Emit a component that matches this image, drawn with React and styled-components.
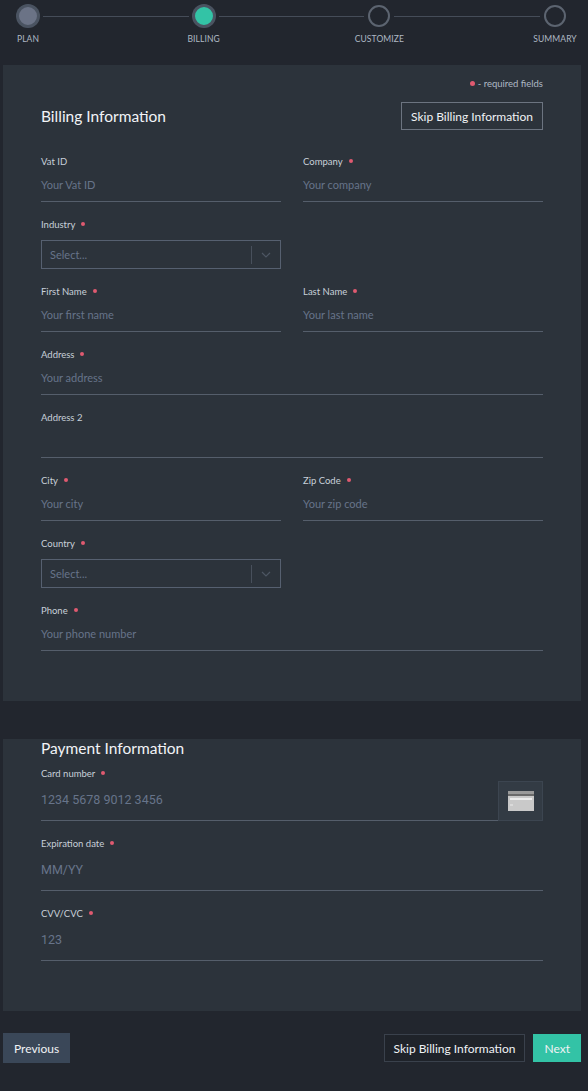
import React from "react";
import styled, { createGlobalStyle } from "styled-components";

const Global = createGlobalStyle`
  body { margin: 0; background: #22262e; font-family: Lato, "Open Sans", sans-serif; color: #e6e9ee; }
  * { box-sizing: border-box; }
`;

const Page = styled.div`padding: 0 7px 12px 3px;`;

const Stepper = styled.div`
  display: flex; align-items: flex-start; padding: 5px 15px 0 14px; height: 65px;
`;
const Step = styled.div`
  display: flex; flex-direction: column; align-items: center; width: ${p => p.w}px; flex: none;
`;
const Dot = styled.div`
  width: 22px; height: 22px; border-radius: 50%;
  border: 2px solid ${p => p.state ? "#4a5361" : "#5c6470"};
  background: ${p => p.state === "done" ? "#6b7386" : p.state === "active" ? "#33c3a6" : "transparent"};
  box-shadow: ${p => p.state ? "0 0 0 1px #4b5462" : "none"};
`;
const StepLabel = styled.div`font-size: 8.5px; color: #aeb8c4; margin-top: 7px; letter-spacing: 0.1px; white-space: nowrap;`;
const Line = styled.div`flex: 1; height: 1px; background: #454c58; margin: 11px 4px 0;`;

const Card = styled.section`
  background: #2c333b; padding: ${p => p.top}px 38px 50px; margin-bottom: ${p => p.mb}px;
`;
const Req = styled.div`
  text-align: right; font-size: 9.5px; color: #aeb8c4; height: 11px; line-height: 11px;
  &::before { content: ""; display: inline-block; width: 5px; height: 5px; border-radius: 50%; background: #e05a70; margin-right: 3px; vertical-align: 1px; }
`;
const Header = styled.div`
  display: flex; justify-content: space-between; align-items: center; margin: 13px 0 25px;
`;
const Title = styled.h2`margin: 0; font-size: 15.5px; font-weight: 400; color: #f2f4f7;`;
const Btn = styled.button`
  font-family: inherit; font-size: 12px; color: #f0f2f5; height: ${p => p.h || 28}px;
  padding: 0 ${p => p.px || 9}px; cursor: pointer;
  background: ${p => p.bg || "transparent"};
  border: 1px solid ${p => p.bd || "#6c7480"};
`;
const Grid = styled.div`display: grid; grid-template-columns: 1fr 1fr; column-gap: 22px; row-gap: 16px;`;
const Field = styled.div`grid-column: ${p => p.full ? "1 / -1" : "auto"}; display: flex; flex-direction: column;`;
const Label = styled.label`
  font-size: 9.5px; color: #c8d0d9; height: 14px; line-height: 14px;
  ${p => p.req && `&::after { content: ""; display: inline-block; width: 4px; height: 4px; border-radius: 50%; background: #e05a70; margin-left: 6px; vertical-align: 2px; }`}
`;
const Input = styled.div`
  height: ${p => p.h || 33}px; flex: ${p => p.grow ? 1 : "none"};
  border-bottom: 1px solid #555e6b; display: flex; align-items: center;
  font-size: ${p => p.fs || 11}px; color: #67748a; font-family: ${p => p.mono ? "Roboto, sans-serif" : "inherit"};
  padding-bottom: 2px;
`;
const Select = styled.div`
  margin-top: 8px; height: 29px; border: 1px solid #566070; display: flex; align-items: center;
  font-size: 11px; color: #67748a; padding-left: 8px;
`;
const SelText = styled.span`flex: 1;`;
const SelSep = styled.span`width: 1px; height: 18px; background: #48505c;`;
const SelArrow = styled.span`width: 28px; display: flex; justify-content: center;`;
const CardRow = styled.div`display: flex; align-items: stretch;`;
const IconBox = styled.div`
  width: 45px; height: 40px; background: #333b44; border: 1px solid #3c4550;
  display: flex; align-items: center; justify-content: center;
`;
const PayTitle = styled(Title)`margin: 38px 0 10px;`;
const PayFields = styled.div`display: flex; flex-direction: column; gap: 16px;`;
const Footer = styled.div`display: flex; align-items: center; margin-top: 22px; gap: 8px;`;
const Spacer = styled.div`flex: 1;`;

const Chevron = () => (
  <svg width="10" height="6" viewBox="0 0 10 6"><path d="M1 1l4 4 4-4" fill="none" stroke="#4d5663" strokeWidth="1.2" /></svg>
);
const CardIcon = () => (
  <svg width="26" height="20" viewBox="0 0 26 20">
    <rect x="0" y="0" width="26" height="20" fill="#c9c9c9" />
    <rect x="0" y="0" width="26" height="3" fill="#9a9a9a" />
    <rect x="0" y="3" width="26" height="2" fill="#6a6a6a" />
    <rect x="2" y="7" width="22" height="2" fill="#ececec" />
    <rect x="2" y="13" width="3" height="2" fill="#dadada" />
  </svg>
);

const TextField = ({ label, ph, req, full }) => (
  <Field full={full}><Label req={req}>{label}</Label><Input>{ph}</Input></Field>
);
const SelectField = ({ label }) => (
  <Field><Label req>{label}</Label>
    <Select><SelText>Select...</SelText><SelSep /><SelArrow><Chevron /></SelArrow></Select>
  </Field>
);

export default function App() {
  const steps = [["PLAN", "done"], ["BILLING", "active"], ["CUSTOMIZE"], ["SUMMARY"]];
  return (
    <Page>
      <Global />
      <Stepper>
        {steps.map(([l, s], i) => (
          <React.Fragment key={l}>
            <Step w={22}><Dot state={s} /><StepLabel>{l}</StepLabel></Step>
            {i < 3 && <Line />}
          </React.Fragment>
        ))}
      </Stepper>
      <Card top={13} mb={23}>
        <Req>- required fields</Req>
        <Header><Title>Billing Information</Title><Btn>Skip Billing Information</Btn></Header>
        <Grid>
          <TextField label="Vat ID" ph="Your Vat ID" />
          <TextField label="Company" ph="Your company" req />
          <SelectField label="Industry" />
          <div />
          <TextField label="First Name" ph="Your first name" req />
          <TextField label="Last Name" ph="Your last name" req />
          <TextField label="Address" ph="Your address" req full />
          <TextField label="Address 2" ph="" full />
          <TextField label="City" ph="Your city" req />
          <TextField label="Zip Code" ph="Your zip code" req />
          <SelectField label="Country" />
          <div />
          <TextField label="Phone" ph="Your phone number" req full />
        </Grid>
      </Card>
      <Card top={0} mb={0}>
        <PayTitle>Payment Information</PayTitle>
        <PayFields>
          <Field><Label req>Card number</Label>
            <CardRow><Input grow h={40} fs={12.5} mono>1234 5678 9012 3456</Input><IconBox><CardIcon /></IconBox></CardRow>
          </Field>
          <Field><Label req>Expiration date</Label><Input h={40} fs={12.5} mono>MM/YY</Input></Field>
          <Field><Label req>CVV/CVC</Label><Input h={40} fs={12.5} mono>123</Input></Field>
        </PayFields>
      </Card>
      <Footer>
        <Btn h={30} px={10} bg="#3a4758" bd="#3a4758">Previous</Btn>
        <Spacer />
        <Btn h={28} bd="#3a414c" bg="#1f232a">Skip Billing Information</Btn>
        <Btn h={28} px={10} bg="#33c3a6" bd="#33c3a6">Next</Btn>
      </Footer>
    </Page>
  );
}
